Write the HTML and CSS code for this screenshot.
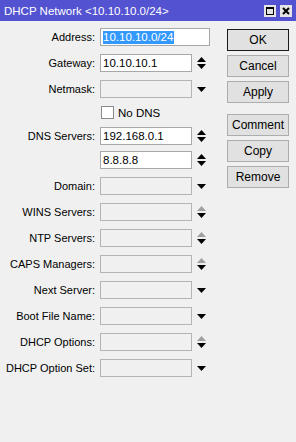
FILE: index.html
```html
<!DOCTYPE html>
<html lang="en">
<head>
  <meta charset="UTF-8" />
  <title>DHCP Network</title>
  <link rel="stylesheet" href="styles.css">
</head>
<body>
  <div class="window">
    <!-- Title bar -->
    <div class="titlebar">
      <span class="title">DHCP Network &lt;10.10.10.0/24&gt;</span>
      <div class="title-btns">
        <span class="tbtn">
          <svg width="12" height="12" viewBox="0 0 12 12"><rect x="2.5" y="2.5" width="7" height="7" fill="none" stroke="#000" stroke-width="1"/><line x1="2" y1="3" x2="10" y2="3" stroke="#000" stroke-width="2"/></svg>
        </span>
        <span class="tbtn">
          <svg width="12" height="12" viewBox="0 0 12 12"><path d="M3 3 L9 9 M9 3 L3 9" stroke="#000" stroke-width="2"/></svg>
        </span>
      </div>
    </div>

    <div class="content">
      <!-- Form -->
      <div class="form">
        <label>Address:</label>
        <div class="field wide on"><span class="sel">10.10.10.0/24</span></div>

        <label>Gateway:</label>
        <div class="field on">10.10.10.1</div>
        <span class="arrow"><svg width="9" height="12" viewBox="0 0 9 12"><path d="M0 5 L9 5 L4.5 0 Z M0 7 L9 7 L4.5 12 Z" fill="#000"/></svg></span>

        <label>Netmask:</label>
        <div class="field"></div>
        <span class="arrow"><svg width="9" height="5" viewBox="0 0 9 5"><path d="M0 0 L9 0 L4.5 5 Z" fill="#000"/></svg></span>

        <span></span>
        <div class="check"><span class="box"></span>No DNS</div>

        <label>DNS Servers:</label>
        <div class="field on">192.168.0.1</div>
        <span class="arrow"><svg width="9" height="12" viewBox="0 0 9 12"><path d="M0 5 L9 5 L4.5 0 Z M0 7 L9 7 L4.5 12 Z" fill="#000"/></svg></span>

        <span class="tight"></span>
        <div class="field on tight">8.8.8.8</div>
        <span class="arrow tight"><svg width="9" height="12" viewBox="0 0 9 12"><path d="M0 5 L9 5 L4.5 0 Z M0 7 L9 7 L4.5 12 Z" fill="#000"/></svg></span>

        <label>Domain:</label>
        <div class="field"></div>
        <span class="arrow"><svg width="9" height="5" viewBox="0 0 9 5"><path d="M0 0 L9 0 L4.5 5 Z" fill="#000"/></svg></span>

        <label>WINS Servers:</label>
        <div class="field"></div>
        <span class="arrow"><svg width="9" height="12" viewBox="0 0 9 12"><path d="M0 5 L9 5 L4.5 0 Z" fill="#a0a0a0"/><path d="M0 7 L9 7 L4.5 12 Z" fill="#000"/></svg></span>

        <label>NTP Servers:</label>
        <div class="field"></div>
        <span class="arrow"><svg width="9" height="12" viewBox="0 0 9 12"><path d="M0 5 L9 5 L4.5 0 Z" fill="#a0a0a0"/><path d="M0 7 L9 7 L4.5 12 Z" fill="#000"/></svg></span>

        <label>CAPS Managers:</label>
        <div class="field"></div>
        <span class="arrow"><svg width="9" height="12" viewBox="0 0 9 12"><path d="M0 5 L9 5 L4.5 0 Z" fill="#a0a0a0"/><path d="M0 7 L9 7 L4.5 12 Z" fill="#000"/></svg></span>

        <label>Next Server:</label>
        <div class="field"></div>
        <span class="arrow"><svg width="9" height="5" viewBox="0 0 9 5"><path d="M0 0 L9 0 L4.5 5 Z" fill="#000"/></svg></span>

        <label>Boot File Name:</label>
        <div class="field"></div>
        <span class="arrow"><svg width="9" height="5" viewBox="0 0 9 5"><path d="M0 0 L9 0 L4.5 5 Z" fill="#000"/></svg></span>

        <label>DHCP Options:</label>
        <div class="field"></div>
        <span class="arrow"><svg width="9" height="12" viewBox="0 0 9 12"><path d="M0 5 L9 5 L4.5 0 Z" fill="#a0a0a0"/><path d="M0 7 L9 7 L4.5 12 Z" fill="#000"/></svg></span>

        <label>DHCP Option Set:</label>
        <div class="field"></div>
        <span class="arrow"><svg width="9" height="5" viewBox="0 0 9 5"><path d="M0 0 L9 0 L4.5 5 Z" fill="#000"/></svg></span>
      </div>

      <!-- Buttons -->
      <div class="buttons">
        <button class="default">OK</button>
        <button>Cancel</button>
        <button>Apply</button>
        <button class="sep">Comment</button>
        <button>Copy</button>
        <button>Remove</button>
      </div>
    </div>
  </div>
</body>
</html>
```

FILE: styles.css
```css
* { margin: 0; padding: 0; box-sizing: border-box; }
html, body {
  width: 100%;
  height: 100%;
  background: #f0f0f0;
  font-family: "Liberation Sans", Arial, sans-serif;
  font-size: 11.5px;
  color: #000;
  overflow: hidden;
}
.titlebar {
  height: 21px;
  background: #5353d2;
  color: #fff;
  display: flex;
  align-items: center;
  justify-content: space-between;
  padding: 0 4px 0 4px;
}
.title { font-size: 11.5px; }
.title-btns { display: flex; gap: 4px; }
.tbtn {
  width: 12px;
  height: 12px;
  background: #e4e4e4;
  display: flex;
}
.content {
  display: flex;
  gap: 17px;
  padding-top: 7px;
}
.form {
  display: grid;
  grid-template-columns: 100px 92px 18px;
  row-gap: 8px;
  align-items: center;
}
.form label {
  text-align: right;
  padding-right: 5px;
  font-size: 11px;
}
.field {
  height: 18px;
  border: 1px solid #b4b4b4;
  background: #f0f0f0;
  padding: 0 2px;
  line-height: 16px;
  white-space: nowrap;
}
.field.on { background: #fff; border-color: #a8a8a8; }
.field.wide { grid-column: 2 / 4; }
.sel { background: #3399ff; color: #fff; display: inline-block; line-height: 13px; padding-right: 1px; }
.arrow { display: flex; justify-content: center; }
.arrow svg { display: block; }
.tight { margin-top: -2px; }
.check {
  grid-column: 2 / 4;
  display: flex;
  align-items: center;
  gap: 4px;
  height: 13px;
  margin-left: 1px;
}
.box {
  width: 13px;
  height: 13px;
  background: #fff;
  border: 1px solid #8a8a8a;
}
.buttons {
  display: flex;
  flex-direction: column;
  gap: 4px;
  padding-top: 1px;
}
button {
  width: 62px;
  height: 22px;
  font: inherit;
  font-size: 12px;
  background: #e1e1e1;
  border: 1px solid #adadad;
  color: #000;
}
button.default { border-color: #1a1a1a; }
button.sep { margin-top: 7px; }
```
